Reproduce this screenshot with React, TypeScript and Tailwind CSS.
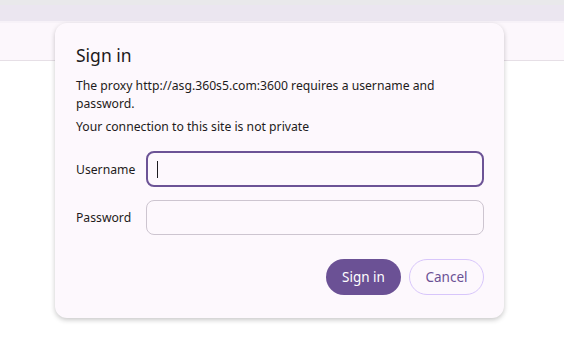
import React from "react";

export default function App() {
  return (
    <div
      className="relative w-[564px] h-[344px] bg-white overflow-hidden"
      style={{ fontFamily: '"Noto Sans", "Open Sans", sans-serif' }}
    >
      <div className="h-[5px] bg-[#e9e9eb]" />
      <div className="h-[16px] bg-[#ebe6f0]" />
      <div className="h-[2px] bg-[#f7f2f8]" />
      <div className="h-[38px] bg-[#fcf7fc] border-b border-[#e6dfe6]" />

      <div className="absolute left-[55px] top-[23px] w-[449px] h-[295px] rounded-[12px] bg-[#fdf8fd] shadow-[0_2px_5px_rgba(0,0,0,0.22)] pl-[21px] pr-[20px] pt-[19px] text-[#1d1b20]">
        <div className="text-[17.5px] leading-[26px]">Sign in</div>
        <div className="mt-[9px] text-[12.2px] leading-[18px]">
          <p>The proxy http://asg.360s5.com:3600 requires a username and password.</p>
          <p className="mt-[5px]">Your connection to this site is not private</p>
        </div>
        <div className="mt-[15px] flex items-center">
          <label className="w-[70px] pt-[3px] text-[12.2px]">Username</label>
          <div className="flex-1 h-[36px] rounded-[8px] border-2 border-[#6c5396] flex items-center pl-[9px]">
            <div className="w-[1px] h-[17px] bg-[#1d1b20]" />
          </div>
        </div>
        <div className="mt-[13px] flex items-center">
          <label className="w-[70px] pt-[2px] text-[12.2px]">Password</label>
          <div className="flex-1 h-[35px] rounded-[8px] border border-[#cdc5d0]" />
        </div>
        <div className="mt-[24px] flex justify-end gap-[8px]">
          <button className="w-[75px] h-[36px] rounded-full bg-[#6b5195] text-white text-[13.5px]">Sign in</button>
          <button className="w-[75px] h-[36px] rounded-full border border-[#d8c6fb] text-[#6b5195] text-[13.5px]">Cancel</button>
        </div>
      </div>
    </div>
  );
}
